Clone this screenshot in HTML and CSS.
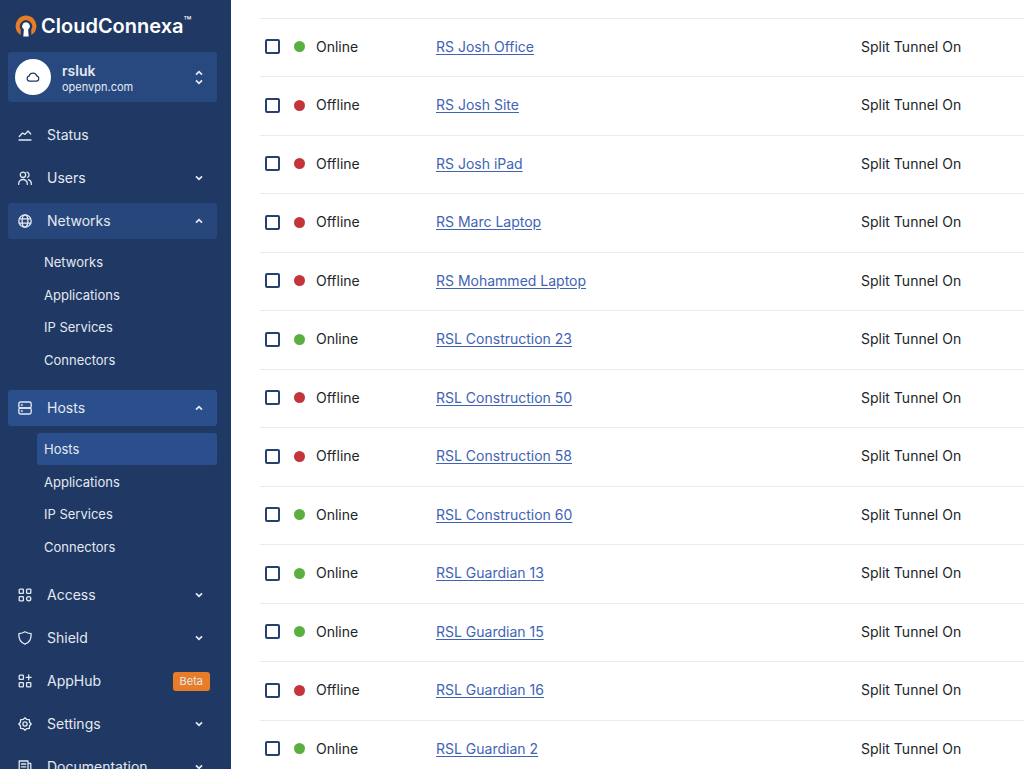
FILE: index.html
```html
<!DOCTYPE html>
<html lang="en">
<head>
    <meta charset="UTF-8">
    <meta name="viewport" content="width=device-width, initial-scale=1.0">
    <title>CloudConnexa</title>
    <link rel="stylesheet" href="styles.css">
</head>
<body>
<!-- shared chevron -->
<svg class="sprite" width="0" height="0">
    <symbol id="chevron" viewBox="0 0 8 6"><path d="M1 1.3L4 4.3L7 1.3"/></symbol>
</svg>
<div class="layout">
    <aside class="sidebar">
        <div class="logo">
            <svg class="logo-mark" viewBox="0 0 22 22">
                <path fill="#e97d27" d="M5.6 19.9A10.4 10.4 0 1 1 16.4 19.9L16.2 14.6A6.1 6.1 0 1 0 5.8 14.6Z"/>
                <path fill="#fff" d="M11 7.2a3.8 3.8 0 0 1 2.1 7L13.7 21.5H8.3l.6-7.3A3.8 3.8 0 0 1 11 7.2Z"/>
            </svg>
            <span class="logo-text">CloudConnexa</span><span class="logo-tm">™</span>
        </div>
        <button class="account" type="button">
            <span class="avatar">
                <svg viewBox="0 0 14 10"><path d="M3.6 9.2A2.7 2.7 0 0 1 3.2 3.9A3.9 3.9 0 0 1 10.7 3.9A2.7 2.7 0 0 1 10.4 9.2Z"/></svg>
            </span>
            <span class="account-info">
                <span class="account-name">rsluk</span>
                <span class="account-domain">openvpn.com</span>
            </span>
            <span class="updown">
                <svg class="chevron up"><use href="#chevron"/></svg>
                <svg class="chevron"><use href="#chevron"/></svg>
            </span>
        </button>
        <nav class="menu">
            <a class="item" href="#">
                <svg class="icon" viewBox="0 0 14 14"><path d="M1 12H13M1.3 8.5L4.5 5L7 6.4L10 3L12.7 6"/></svg>
                <span>Status</span>
            </a>
            <button class="item" type="button">
                <svg class="icon" viewBox="0 0 14 14"><circle cx="5" cy="3.8" r="2.7"/><path d="M.7 13.5V12.8A4.3 4.3 0 0 1 9.3 12.8V13.5M9 1.2A2.7 2.7 0 0 1 9.6 6.2M10.4 8.7A4.3 4.3 0 0 1 13.3 12.8V13.5"/></svg>
                <span>Users</span>
                <svg class="chevron"><use href="#chevron"/></svg>
            </button>
            <button class="item open" type="button">
                <svg class="icon" viewBox="0 0 14 14"><circle cx="7" cy="7" r="6.2"/><ellipse cx="7" cy="7" rx="2.9" ry="6.2"/><path d="M1.4 4.8H12.6M1.4 9.2H12.6"/></svg>
                <span>Networks</span>
                <svg class="chevron up"><use href="#chevron"/></svg>
            </button>
            <div class="submenu">
                <a href="#">Networks</a>
                <a href="#">Applications</a>
                <a href="#">IP Services</a>
                <a href="#">Connectors</a>
            </div>
            <button class="item active" type="button">
                <svg class="icon" viewBox="0 0 14 14"><rect x=".8" y="1" width="12.4" height="6" rx="1.8"/><rect x=".8" y="7" width="12.4" height="6" rx="1.8"/><path d="M3.3 4H4.3M3.3 10H4.3"/></svg>
                <span>Hosts</span>
                <svg class="chevron up"><use href="#chevron"/></svg>
            </button>
            <div class="submenu">
                <a class="active" href="#">Hosts</a>
                <a href="#">Applications</a>
                <a href="#">IP Services</a>
                <a href="#">Connectors</a>
            </div>
            <button class="item" type="button">
                <svg class="icon" viewBox="0 0 14 14"><rect x="1.2" y="1.2" width="4.2" height="4.2" rx=".6"/><rect x="8.6" y="1.2" width="4.2" height="4.2" rx=".6"/><rect x="1.2" y="8.6" width="4.2" height="4.2" rx=".6"/><circle cx="10.7" cy="10.7" r="2.1"/></svg>
                <span>Access</span>
                <svg class="chevron"><use href="#chevron"/></svg>
            </button>
            <button class="item" type="button">
                <svg class="icon" viewBox="0 0 14 14"><path d="M7 .8C5 2.1 3 2.5 .9 2.6C.6 7.8 2.6 11.7 7 13.2C11.4 11.7 13.4 7.8 13.1 2.6C11 2.5 9 2.1 7 .8Z"/></svg>
                <span>Shield</span>
                <svg class="chevron"><use href="#chevron"/></svg>
            </button>
            <a class="item" href="#">
                <svg class="icon" viewBox="0 0 14 14"><rect x="1.2" y="1.2" width="4.2" height="4.2" rx=".6"/><rect x="1.2" y="8.6" width="4.2" height="4.2" rx=".6"/><rect x="8.6" y="8.6" width="4.2" height="4.2" rx=".6"/><path d="M10.7 .8V5.8M8.2 3.3H13.2"/></svg>
                <span>AppHub</span>
                <span class="badge">Beta</span>
            </a>
            <button class="item" type="button">
                <svg class="icon" viewBox="0 0 14 14"><path d="M7 .8L8.8 2.4L11.3 2.7L11.6 5.2L13.2 7L11.6 8.8L11.3 11.3L8.8 11.6L7 13.2L5.2 11.6L2.7 11.3L2.4 8.8L.8 7L2.4 5.2L2.7 2.7L5.2 2.4Z"/><circle cx="7" cy="7" r="2.1"/></svg>
                <span>Settings</span>
                <svg class="chevron"><use href="#chevron"/></svg>
            </button>
            <button class="item" type="button">
                <svg class="icon" viewBox="0 0 14 14"><path d="M1.2 1H10V13H2.7A1.5 1.5 0 0 1 1.2 11.5ZM10 3.4H12.8V11.6A1.4 1.4 0 0 1 10 11.6M3.4 4H7.8M3.4 6.8H7.8M3.4 9.6H7.8"/></svg>
                <span>Documentation</span>
                <svg class="chevron"><use href="#chevron"/></svg>
            </button>
        </nav>
    </aside>
    <main class="content">
        <table class="hosts">
            <colgroup>
                <col class="col-check">
                <col class="col-status">
                <col>
                <col class="col-tunnel">
            </colgroup>
            <tbody>
            <tr>
                <td><input type="checkbox" id="host1"></td>
                <td><label class="status online" for="host1">Online</label></td>
                <td><a href="#">RS Josh Office</a></td>
                <td>Split Tunnel On</td>
            </tr>
            <tr>
                <td><input type="checkbox" id="host2"></td>
                <td><label class="status offline" for="host2">Offline</label></td>
                <td><a href="#">RS Josh Site</a></td>
                <td>Split Tunnel On</td>
            </tr>
            <tr>
                <td><input type="checkbox" id="host3"></td>
                <td><label class="status offline" for="host3">Offline</label></td>
                <td><a href="#">RS Josh iPad</a></td>
                <td>Split Tunnel On</td>
            </tr>
            <tr>
                <td><input type="checkbox" id="host4"></td>
                <td><label class="status offline" for="host4">Offline</label></td>
                <td><a href="#">RS Marc Laptop</a></td>
                <td>Split Tunnel On</td>
            </tr>
            <tr>
                <td><input type="checkbox" id="host5"></td>
                <td><label class="status offline" for="host5">Offline</label></td>
                <td><a href="#">RS Mohammed Laptop</a></td>
                <td>Split Tunnel On</td>
            </tr>
            <tr>
                <td><input type="checkbox" id="host6"></td>
                <td><label class="status online" for="host6">Online</label></td>
                <td><a href="#">RSL Construction 23</a></td>
                <td>Split Tunnel On</td>
            </tr>
            <tr>
                <td><input type="checkbox" id="host7"></td>
                <td><label class="status offline" for="host7">Offline</label></td>
                <td><a href="#">RSL Construction 50</a></td>
                <td>Split Tunnel On</td>
            </tr>
            <tr>
                <td><input type="checkbox" id="host8"></td>
                <td><label class="status offline" for="host8">Offline</label></td>
                <td><a href="#">RSL Construction 58</a></td>
                <td>Split Tunnel On</td>
            </tr>
            <tr>
                <td><input type="checkbox" id="host9"></td>
                <td><label class="status online" for="host9">Online</label></td>
                <td><a href="#">RSL Construction 60</a></td>
                <td>Split Tunnel On</td>
            </tr>
            <tr>
                <td><input type="checkbox" id="host10"></td>
                <td><label class="status online" for="host10">Online</label></td>
                <td><a href="#">RSL Guardian 13</a></td>
                <td>Split Tunnel On</td>
            </tr>
            <tr>
                <td><input type="checkbox" id="host11"></td>
                <td><label class="status online" for="host11">Online</label></td>
                <td><a href="#">RSL Guardian 15</a></td>
                <td>Split Tunnel On</td>
            </tr>
            <tr>
                <td><input type="checkbox" id="host12"></td>
                <td><label class="status offline" for="host12">Offline</label></td>
                <td><a href="#">RSL Guardian 16</a></td>
                <td>Split Tunnel On</td>
            </tr>
            <tr>
                <td><input type="checkbox" id="host13"></td>
                <td><label class="status online" for="host13">Online</label></td>
                <td><a href="#">RSL Guardian 2</a></td>
                <td>Split Tunnel On</td>
            </tr>
            </tbody>
        </table>
    </main>
</div>
</body>
</html>
```
FILE: styles.css
```css
* {
    box-sizing: border-box;
}

body {
    margin: 0;
    font-family: Inter, "Liberation Sans", sans-serif;
    font-size: 14px;
    line-height: 20px;
    color: #212529;
    background: #fff;
}

button {
    font: inherit;
    color: inherit;
    background: none;
    border: 0;
    text-align: left;
    cursor: pointer;
}

.sprite {
    position: absolute;
}

.layout {
    display: flex;
    height: 100vh;
}

/* sidebar */
.sidebar {
    flex: none;
    width: 231px;
    padding: 0 14px 0 8px;
    overflow: hidden;
    color: #e4e9f1;
    background: #1f3864;
}

.logo {
    display: flex;
    align-items: center;
    height: 52px;
    padding-left: 7px;
    color: #fff;
}

.logo-mark {
    width: 22px;
    height: 22px;
    margin-right: 4px;
}

.logo-text {
    font-size: 20px;
    font-weight: 600;
}

.logo-tm {
    align-self: flex-start;
    padding-top: 11px;
    font-size: 13px;
}

.account {
    display: flex;
    align-items: center;
    width: 100%;
    height: 50px;
    padding: 0 14px 0 7px;
    border-radius: 3px;
    background: #27497f;
}

.avatar {
    display: flex;
    align-items: center;
    justify-content: center;
    width: 36px;
    height: 36px;
    margin-right: 11px;
    border-radius: 50%;
    background: #fff;
}

.avatar svg {
    width: 14px;
    height: 10px;
    fill: none;
    stroke: #1f3864;
    stroke-width: 1.2;
}

.account-info {
    display: flex;
    flex-direction: column;
    padding-top: 3px;
    line-height: 17px;
}

.account-name {
    font-weight: 600;
}

.account-domain {
    font-size: 11px;
}

.updown {
    display: flex;
    flex-direction: column;
    gap: 3px;
    margin-left: auto;
}

.menu {
    display: flex;
    flex-direction: column;
    gap: 7px;
    padding-top: 15px;
}

.item {
    display: flex;
    flex: none;
    align-items: center;
    height: 36px;
    padding: 0 14px 0 10px;
    border-radius: 3px;
    color: inherit;
    text-decoration: none;
}

.item.open {
    background: #27467b;
}

.item.active,
.submenu .active {
    background: #2b4f8c;
}

.icon {
    width: 14px;
    height: 14px;
    margin-right: 15px;
    fill: none;
    stroke: currentColor;
    stroke-width: 1.3;
    stroke-linecap: round;
    stroke-linejoin: round;
}

.chevron {
    width: 8px;
    height: 6px;
    fill: none;
    stroke: currentColor;
    stroke-width: 1.8;
}

.item .chevron,
.badge {
    margin-left: auto;
}

.up {
    transform: rotate(180deg);
}

.submenu {
    display: flex;
    flex-direction: column;
    justify-content: space-between;
    min-height: 130px;
    margin: 0 0 7px 29px;
}

.submenu a {
    padding: 6px 7px;
    border-radius: 3px;
    font-size: 13px;
    color: inherit;
    text-decoration: none;
}

.badge {
    margin-right: -7px;
    padding: 0 7px;
    border-radius: 3px;
    font-size: 11px;
    line-height: 19px;
    background: #e97d27;
}

/* hosts table */
.content {
    flex: 1;
    padding: 18px 0 0 29px;
    overflow: hidden;
}

.hosts {
    width: 100%;
    table-layout: fixed;
    border-collapse: collapse;
}

.col-check {
    width: 34px;
}

.col-status {
    width: 142px;
}

.col-tunnel {
    width: 163px;
}

.hosts tr {
    height: 58px;
    border-top: 1px solid #e9eaec;
}

.hosts tr:nth-child(even) {
    height: 59px;
}

.hosts td {
    padding: 0 0 2px;
}

.hosts input {
    display: block;
    appearance: none;
    width: 15px;
    height: 15px;
    margin: 0 0 0 5px;
    border: 2px solid #27406e;
    border-radius: 2px;
}

.hosts a {
    color: #3f63b5;
    text-underline-offset: 2px;
}

.status {
    display: flex;
    align-items: center;
    gap: 11px;
}

.status::before {
    content: "";
    width: 11px;
    height: 11px;
    border-radius: 50%;
}

.online::before {
    background: #5aaf41;
}

.offline::before {
    background: #c4353b;
}
```
